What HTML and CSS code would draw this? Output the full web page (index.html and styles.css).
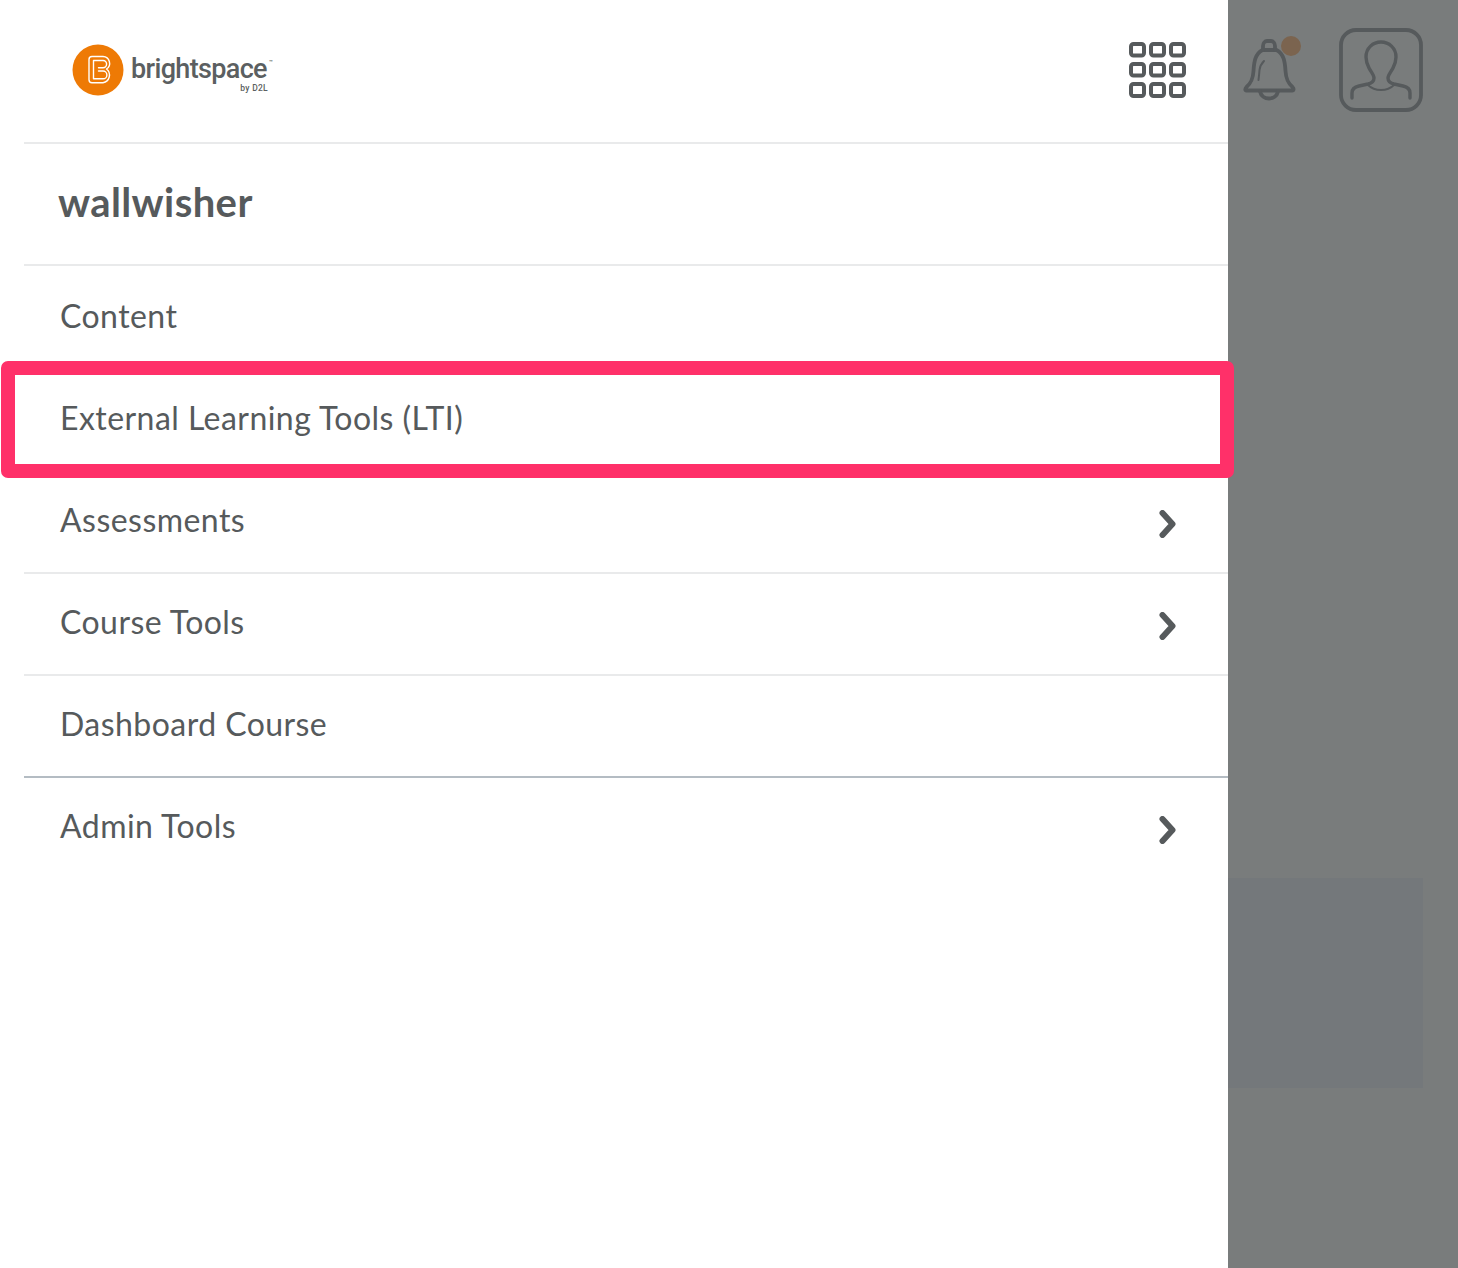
FILE: index.html
```html
<!DOCTYPE html>
<html lang="en">
<head>
<meta charset="utf-8">
<title>Brightspace navigation</title>
<link rel="stylesheet" href="styles.css">
</head>
<body>
<div class="page">
  <nav class="drawer">
    <div class="drawer-inner">
      <header class="top">
        <div class="logo">
          <svg class="logo-mark" viewBox="0 0 52 52" aria-hidden="true">
            <circle cx="26" cy="26" r="25.500" fill="#ee7a05"/>
            <path d="M20 12.500H31A6.800 6.800 0 0 1 34.500 25A7.800 7.800 0 0 1 31 38.800H20A3 3 0 0 1 17 35.800V15.500A3 3 0 0 1 20 12.500Z" fill="none" stroke="#fff" stroke-width="1.400" stroke-linejoin="round"/>
            <path d="M21.500 16.500H31A3.500 3.500 0 0 1 31 23.700H26.500M26.500 27H31A3.900 3.900 0 0 1 31 34.800H21.500V16.500" fill="none" stroke="#fff" stroke-width="1.400" stroke-linecap="round" stroke-linejoin="round"/>
          </svg>
          <div class="logo-words">
            <div class="logo-name">brightspace<sup class="logo-tm">™</sup></div>
            <div class="logo-by">by D2L</div>
          </div>
        </div>
        <svg class="apps" viewBox="0 0 57 57" aria-hidden="true">
          <g fill="none" stroke="#565a5c" stroke-width="4">
            <rect x="2" y="3" width="13" height="11.500" rx="2.500"/>
            <rect x="22" y="3" width="13" height="11.500" rx="2.500"/>
            <rect x="42" y="3" width="13" height="11.500" rx="2.500"/>
            <rect x="2" y="23" width="13" height="11.500" rx="2.500"/>
            <rect x="22" y="23" width="13" height="11.500" rx="2.500"/>
            <rect x="42" y="23" width="13" height="11.500" rx="2.500"/>
            <rect x="2" y="43" width="13" height="12" rx="2.500"/>
            <rect x="22" y="43" width="13" height="12" rx="2.500"/>
            <rect x="42" y="43" width="13" height="12" rx="2.500"/>
          </g>
        </svg>
      </header>
      <h1 class="course">wallwisher</h1>
      <ul class="menu">
        <li class="item">Content</li>
        <li class="item item-marked">External Learning Tools (LTI)<span class="mark"></span></li>
        <li class="item">Assessments
          <svg class="chev" viewBox="0 0 18 28" aria-hidden="true"><path d="M3.500 3 13.500 14 3.500 25" fill="none" stroke="#565a5c" stroke-width="6" stroke-linecap="round" stroke-linejoin="round"/></svg>
        </li>
        <li class="item">Course Tools
          <svg class="chev" viewBox="0 0 18 28" aria-hidden="true"><path d="M3.500 3 13.500 14 3.500 25" fill="none" stroke="#565a5c" stroke-width="6" stroke-linecap="round" stroke-linejoin="round"/></svg>
        </li>
        <li class="item item-last">Dashboard Course</li>
        <li class="item item-admin">Admin Tools
          <svg class="chev" viewBox="0 0 18 28" aria-hidden="true"><path d="M3.500 3 13.500 14 3.500 25" fill="none" stroke="#565a5c" stroke-width="6" stroke-linecap="round" stroke-linejoin="round"/></svg>
        </li>
      </ul>
    </div>
  </nav>
  <aside class="backdrop">
    <div class="actions">
      <svg class="bell" viewBox="0 0 58 66" aria-hidden="true">
        <g fill="none" stroke="#565a5c" stroke-width="3.800" stroke-linecap="round" stroke-linejoin="round">
          <path d="M3 54.500H49c2 0 2-2 .5-3.500c-4-3.500-6.500-7-7-16c-.5-9-1.500-17-9-21H19.500c-7.500 4-8.500 12-9 21c-.5 9-3 12.500-7 16c-1.500 1.500-1.500 3.500-.5 3.500z"/>
          <path d="M20 14V10c0-3 2-5 4-5h4c2 0 4 2 4 5V14"/>
          <path d="M17 55.500c1 4.500 5 7 9 7s8-2.500 9-7"/>
          <path d="M21 25c-3 3-4 5-4.500 9c-.3 4-.5 6-1 10" stroke-width="2"/>
        </g>
        <circle cx="48" cy="10" r="10" fill="#7b644f"/>
      </svg>
      <svg class="avatar" viewBox="0 0 84 84" aria-hidden="true">
        <g fill="none" stroke="#565a5c" stroke-linecap="round" stroke-linejoin="round">
          <rect x="2" y="2" width="80" height="80" rx="15" stroke-width="3.800"/>
          <path d="M13 70v-5c0-4 2-6 7-7l9-2c4-1 6-3 6-6c0-3-3-6-5-10c-2-4-3-7-3-11c0-9 7-15 15-15s15 6 15 15c0 4-1 7-3 11c-2 4-5 7-5 10c0 3 2 5 6 6l9 2c5 1 7 3 7 7v5" stroke-width="3.400"/>
          <path d="M29 57c3 3 8 5 13 5s10-2 13-5" stroke-width="1.800"/>
        </g>
      </svg>
    </div>
    <div class="ghost-card"></div>
  </aside>
</div>
</body>
</html>
```
FILE: styles.css
```css
* { box-sizing: border-box; }
html, body { margin: 0; padding: 0; height: 100%; }
body { font-family: Lato, "Noto Sans", sans-serif; color: #565a5c; background: #fff; overflow: hidden; }
.page { display: flex; width: 1458px; height: 1268px; }

.drawer { width: 1228px; flex: none; background: #fff; padding-left: 24px; }
.drawer-inner { display: flex; flex-direction: column; }

.top { height: 144px; border-bottom: 2px solid #e9eaeb; display: flex; align-items: flex-start; justify-content: space-between; padding: 41px 42px 0 48px; }
.logo { display: flex; align-items: flex-start; gap: 7px; margin-top: 3px; }
.logo-mark { width: 52px; height: 52px; flex: none; }
.logo-words { display: flex; flex-direction: column; width: 144px; }
.logo-name { font-family: Roboto, Lato, sans-serif; font-size: 27px; line-height: 24px; font-weight: 500; letter-spacing: -0.65px; color: #5b5f61; margin-top: 13px; white-space: nowrap; }
.logo-tm { font-size: 6px; line-height: 0; vertical-align: 14px; margin-left: 2px; }
.logo-by { font-family: Roboto, Lato, sans-serif; font-size: 8.500px; line-height: 10px; font-weight: 500; letter-spacing: 0.3px; color: #5b5f61; text-align: right; padding-right: 7px; margin-top: 2px; }
.apps { width: 57px; height: 57px; flex: none; }

.course { margin: 0; height: 122px; border-bottom: 2px solid #e9eaeb; padding: 0 0 0 34px; font-size: 40px; line-height: 117px; font-weight: 700; letter-spacing: 0.4px; color: #565a5c; }

.menu { list-style: none; margin: 2px 0 0; padding: 0; }
.item { position: relative; height: 102px; padding: 0 51px 6px 36px; border-bottom: 2px solid #e9eaeb; display: flex; align-items: center; justify-content: space-between; font-size: 32px; letter-spacing: 0.45px; color: #565a5c; }
.item-last { border-bottom-color: #b4bcc3; }
.item-admin { border-bottom-color: transparent; }
.chev { width: 18px; height: 28px; flex: none; margin-top: 9px; }
.mark { position: absolute; left: -23px; top: -9px; width: 1233px; height: 117px; border: 14px solid #ff3069; border-radius: 7px; }

.backdrop { flex: 1; background: #797c7c; display: flex; flex-direction: column; padding: 28px 35px 0 0; }
.actions { display: flex; align-items: flex-start; justify-content: space-between; padding-left: 15px; height: 850px; }
.bell { width: 58px; height: 66px; margin-top: 8px; }
.avatar { width: 84px; height: 84px; }
.ghost-card { height: 210px; background: #74787b; }
```
